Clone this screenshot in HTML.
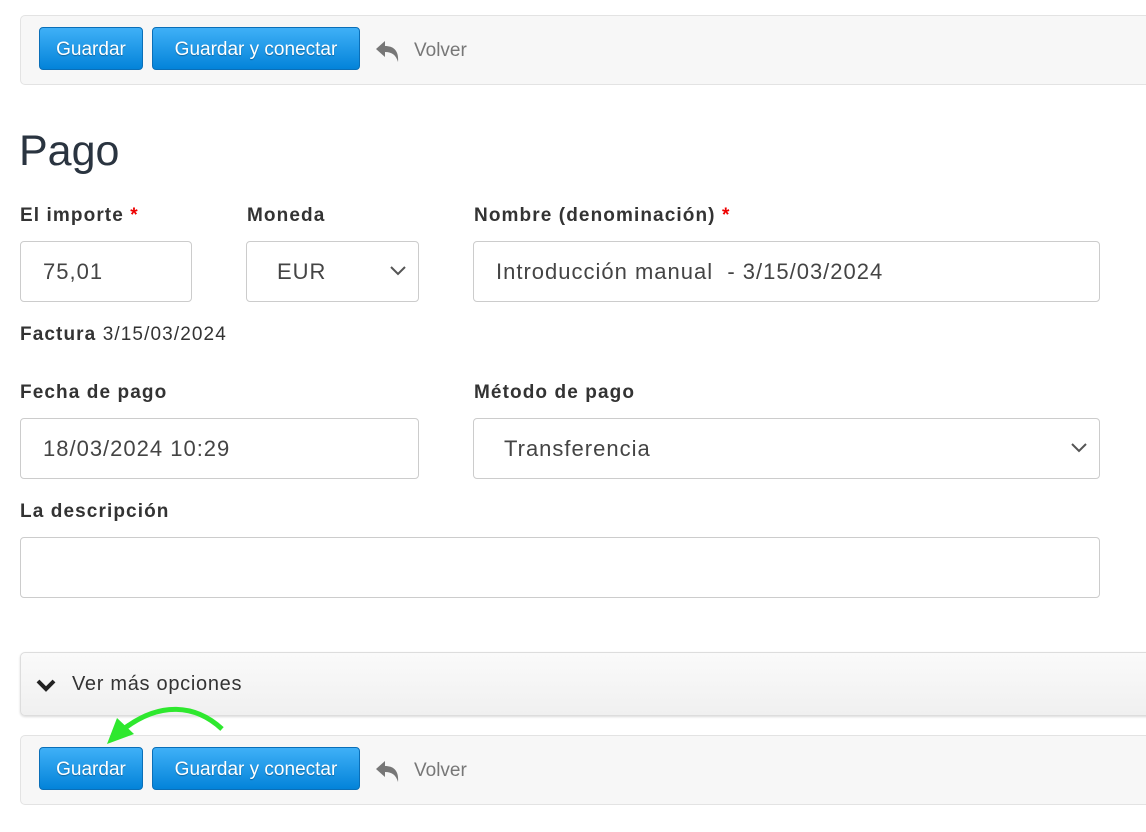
<!DOCTYPE html>
<html><head><meta charset="utf-8"><style>
body{margin:0;width:1146px;height:832px;background:#fff;font-family:"Liberation Sans",sans-serif;position:relative;overflow:hidden;color:#333}
.bar{position:absolute;left:20px;width:1140px;height:68px;background:#f7f7f7;border:1px solid #e3e3e3;border-radius:5px}
.btn{position:absolute;height:43px;border-radius:4px;border:1px solid #0a6fb8;background:linear-gradient(#3fb0f7,#0383d9);color:#fff;font-size:19px;line-height:44px;text-align:center;text-shadow:0 1px 1px rgba(0,0,0,.3);box-sizing:border-box}
.volver{position:absolute;font-size:19px;color:#777}
.lbl{position:absolute;font-weight:bold;font-size:19px;letter-spacing:1.1px;color:#333}
.req{color:#e00}
.inp{position:absolute;border:1px solid #ccc;border-radius:4px;box-sizing:border-box;font-size:22px;letter-spacing:1px;color:#444;padding-left:22px;line-height:60px}
.chev{position:absolute;right:12px;top:24px}
</style></head><body>
<div class="bar" style="top:15px"></div>
<div class="btn" style="left:39px;top:27px;width:104px">Guardar</div>
<div class="btn" style="left:152px;top:27px;width:208px">Guardar y conectar</div>
<svg style="position:absolute;left:375px;top:40px" width="26" height="24" viewBox="0 0 26 24"><path d="M1 9 L10 1 V6 C19 6 24 11 23 22 C21 15 17 12 10 12 V17 Z" fill="#777"/></svg>
<div class="volver" style="left:414px;top:40px">Volver</div>

<div style="position:absolute;left:19px;top:127px;font-size:43px;color:#2a3440">Pago</div>

<div class="lbl" style="left:20px;top:205px">El importe <span class="req">*</span></div>
<div class="lbl" style="left:247px;top:205px">Moneda</div>
<div class="lbl" style="left:474px;top:205px">Nombre (denominación) <span class="req">*</span></div>
<div class="inp" style="left:20px;top:241px;width:172px;height:61px">75,01</div>
<div class="inp" style="left:246px;top:241px;width:173px;height:61px;padding-left:30px">EUR<svg class="chev" width="16" height="10" viewBox="0 0 16 10"><path d="M1 1 L8 8 L15 1" stroke="#555" stroke-width="2" fill="none"/></svg></div>
<div class="inp" style="left:473px;top:241px;width:627px;height:61px">Introducción manual&nbsp; - 3/15/03/2024</div>

<div style="position:absolute;left:20px;top:324px;font-size:19px;letter-spacing:1.1px"><b>Factura</b> 3/15/03/2024</div>

<div class="lbl" style="left:20px;top:382px">Fecha de pago</div>
<div class="lbl" style="left:474px;top:382px">Método de pago</div>
<div class="inp" style="left:20px;top:418px;width:399px;height:61px">18/03/2024 10:29</div>
<div class="inp" style="left:473px;top:418px;width:627px;height:61px;padding-left:30px">Transferencia<svg class="chev" width="16" height="10" viewBox="0 0 16 10"><path d="M1 1 L8 8 L15 1" stroke="#555" stroke-width="2" fill="none"/></svg></div>

<div class="lbl" style="left:20px;top:501px">La descripción</div>
<div class="inp" style="left:20px;top:537px;width:1080px;height:61px"></div>

<div style="position:absolute;left:20px;top:652px;width:1140px;height:64px;box-sizing:border-box;border:1px solid #ddd;border-radius:5px;background:linear-gradient(#fafafa,#f0f0f0);box-shadow:0 1px 2px rgba(0,0,0,.15)"></div>
<svg style="position:absolute;left:36px;top:679px" width="20" height="14" viewBox="0 0 20 14"><path d="M2 2 L10 10 L18 2" stroke="#222" stroke-width="4" fill="none"/></svg>
<div style="position:absolute;left:72px;top:673px;font-size:20px;letter-spacing:0.7px;color:#333">Ver más opciones</div>

<div class="bar" style="top:735px"></div>
<div class="btn" style="left:39px;top:747px;width:104px">Guardar</div>
<div class="btn" style="left:152px;top:747px;width:208px">Guardar y conectar</div>
<svg style="position:absolute;left:375px;top:760px" width="26" height="24" viewBox="0 0 26 24"><path d="M1 9 L10 1 V6 C19 6 24 11 23 22 C21 15 17 12 10 12 V17 Z" fill="#777"/></svg>
<div class="volver" style="left:414px;top:760px">Volver</div>

<svg style="position:absolute;left:0;top:0" width="1146" height="832"><path d="M222 729 C195 704 160 702 125 728" stroke="#2ee82e" stroke-width="5" fill="none"/><path d="M107 744 L117 718 L134 734 Z" fill="#2ee82e"/></svg>
</body></html>
